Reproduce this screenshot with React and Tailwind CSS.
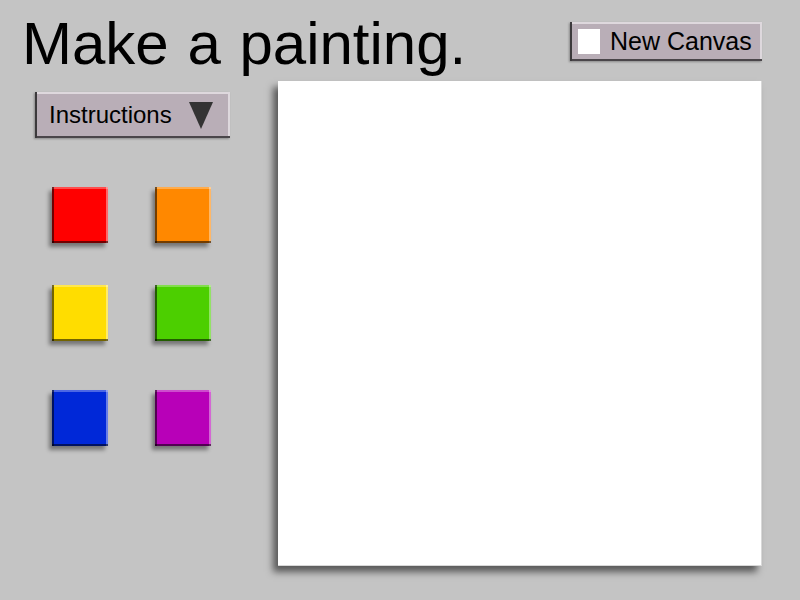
import React from 'react';

const swatchRows = [
  { mt: 'mt-[49px]', colors: ['bg-[#ff0000]', 'bg-[#ff8800]'] },
  { mt: 'mt-[42px]', colors: ['bg-[#ffdd00]', 'bg-[#4ccf00]'] },
  { mt: 'mt-[49px]', colors: ['bg-[#0028d8]', 'bg-[#b800b8]'] },
];

const bevel =
  'shadow-[inset_2px_0_0_#3c3a3c,inset_0_-2px_0_#4a464a,inset_0_2px_0_#ded8dd,inset_-2px_0_0_#ded8dd,-1px_1px_2px_rgba(0,0,0,0.3)]';

const Swatch = ({ color }) => (
  <button
    className={`w-[56px] h-[56px] ${color} shadow-[inset_2px_0_0_rgba(0,0,0,0.55),inset_0_-2px_0_rgba(0,0,0,0.55),inset_-2px_0_0_rgba(255,255,255,0.4),inset_0_2px_0_rgba(255,255,255,0.3),-3px_4px_4px_rgba(0,0,0,0.4)]`}
  />
);

export default function App() {
  return (
    <div className="w-[800px] h-[600px] bg-[#c4c4c4] overflow-hidden font-['Liberation_Sans',Arial,sans-serif] text-black">
      {/* Header */}
      <div className="flex items-start justify-between pl-[22px] pr-[38px] pt-[14px]">
        <h1 className="text-[60px] leading-none h-[60px] [word-spacing:2px]">
          Make a painting.
        </h1>
        <button
          className={`mt-[8px] w-[192px] h-[39px] bg-[#b9aeb7] flex items-center pl-[8px] ${bevel}`}
        >
          <span className="w-[22px] h-[25px] bg-white shrink-0" />
          <span className="ml-[10px] text-[25px] leading-none">New Canvas</span>
        </button>
      </div>

      {/* Body */}
      <div className="flex mt-[7px]">
        <div className="w-[278px] pl-[35px] shrink-0">
          <button
            className={`mt-[11px] w-[195px] h-[46px] bg-[#b9aeb7] flex items-center pl-[14px] ${bevel}`}
          >
            <span className="text-[24px] leading-none">Instructions</span>
            <svg className="ml-[17px]" width="24" height="27" viewBox="0 0 24 27">
              <polygon points="0,0 24,0 12,27" fill="#333333" />
            </svg>
          </button>

          <div className="pl-[17px]">
            {swatchRows.map((row, i) => (
              <div key={i} className={`flex gap-[47px] ${row.mt}`}>
                {row.colors.map((c) => (
                  <Swatch key={c} color={c} />
                ))}
              </div>
            ))}
          </div>
        </div>

        <div className="w-[484px] h-[485px] bg-white shadow-[-5px_6px_7px_rgba(0,0,0,0.55)] border-r border-b border-[#d8d8d8]" />
      </div>
    </div>
  );
}
